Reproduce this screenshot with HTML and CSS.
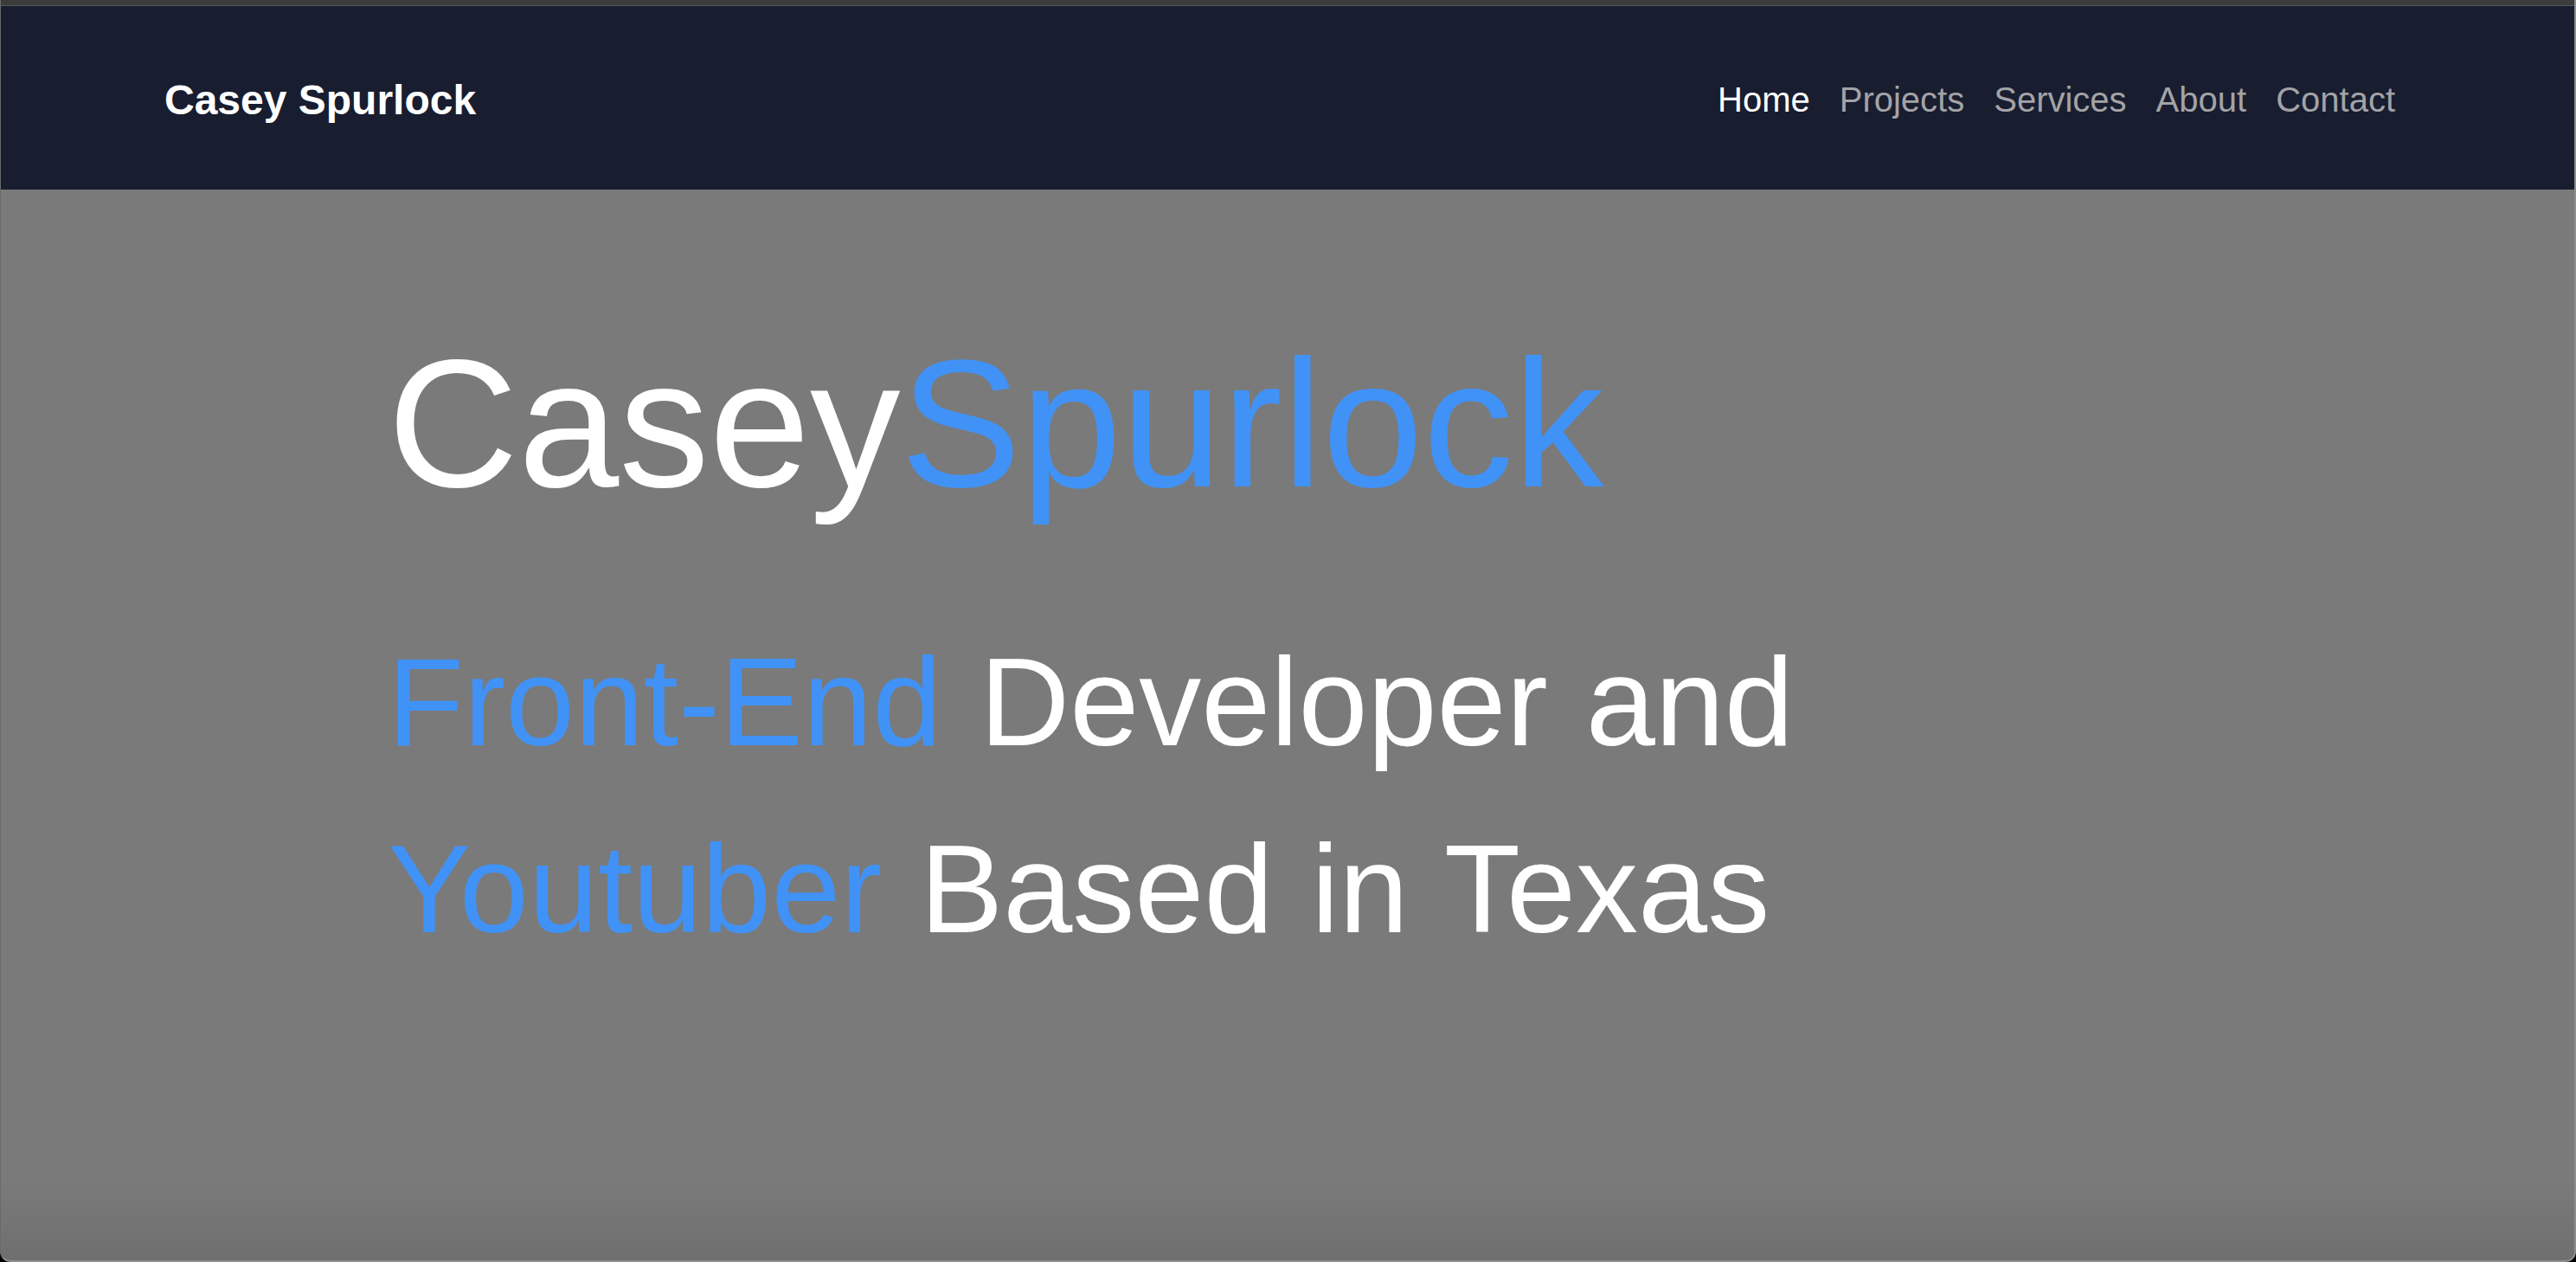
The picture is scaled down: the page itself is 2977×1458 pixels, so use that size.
FILE: index.html
```html
<!DOCTYPE html>
<html lang="en">
<head>
<meta charset="utf-8">
<title>Casey Spurlock</title>
<link rel="stylesheet" href="styles.css">
</head>
<body>
<div class="window">
  <div class="titlebar"></div>
  <header class="nav">
    <a class="brand" href="#">Casey Spurlock</a>
    <nav class="links">
      <a class="link active" href="#">Home</a>
      <a class="link" href="#">Projects</a>
      <a class="link" href="#">Services</a>
      <a class="link" href="#">About</a>
      <a class="link" href="#">Contact</a>
    </nav>
  </header>
  <main class="hero">
    <h1 class="title">Casey<span class="accent">Spurlock</span></h1>
    <p class="subtitle"><span class="accent">Front-End</span> Developer and<br><span class="accent">Youtuber</span> Based in Texas</p>
  </main>
</div>
</body>
</html>
```
FILE: styles.css
```css
html, body {
  margin: 0;
  padding: 0;
  background: #000;
}
body {
  font-family: "Liberation Sans", Arial, Helvetica, sans-serif;
  width: 2977px;
  height: 1458px;
  overflow: hidden;
}
.window {
  width: 2977px;
  height: 1458px;
  box-sizing: border-box;
  display: flex;
  flex-direction: column;
  border-left: 1px solid #6a6a6a;
  border-right: 2px solid #8c8c8c;
  border-bottom: 2px solid #8e8e8e;
  border-radius: 0 0 12px 12px;
  overflow: hidden;
  background: #7a7a7a;
}
.titlebar {
  height: 6px;
  flex: none;
  background: #3c3c3c;
  border-bottom: 1px solid #575757;
}
.nav {
  flex: none;
  height: 212px;
  background: #181d30;
  display: flex;
  align-items: center;
  justify-content: space-between;
  padding: 0 207px 0 189px;
}
.brand {
  color: #ffffff;
  font-weight: 700;
  font-size: 48px;
  text-decoration: none;
  position: relative;
  top: 2px;
}
.links {
  display: flex;
  gap: 34px;
}
.link {
  color: #a3a3a6;
  font-size: 40px;
  text-decoration: none;
  position: relative;
  top: 2px;
}
.link.active {
  color: #ffffff;
}
.hero {
  flex: 1;
  padding: 166px 0 0 447px;
  background: linear-gradient(to bottom, #7a7a7a 0, #7a7a7a calc(100% - 90px), #6f6f6f 100%);
}
.title {
  margin: 0;
  font-weight: 400;
  font-size: 209px;
  line-height: 1;
  color: #ffffff;
}
.subtitle {
  margin: 110px 0 0;
  font-size: 144px;
  line-height: 216px;
  color: #ffffff;
  word-spacing: 4px;
}
.accent {
  color: #4192f6;
}
```
